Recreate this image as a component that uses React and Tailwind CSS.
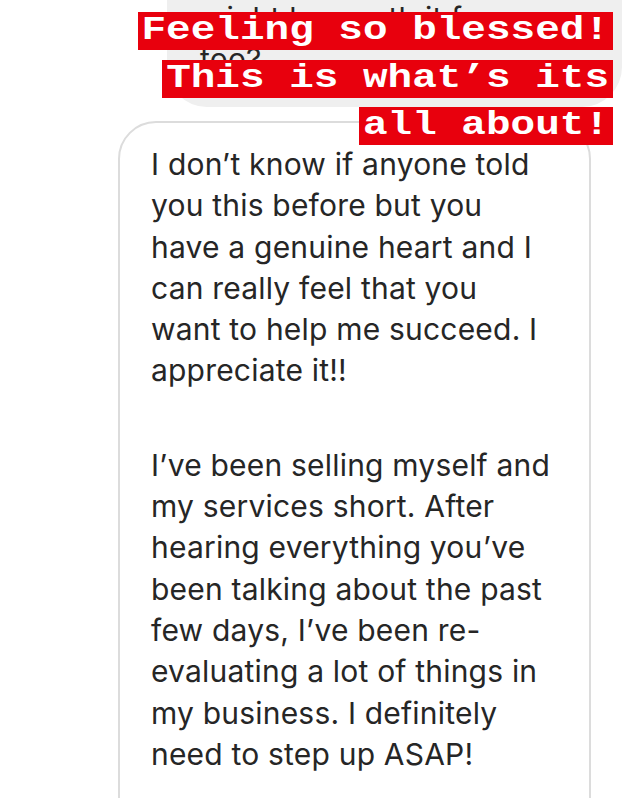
import React from "react";

const p1 = [
  "I don’t know if anyone told",
  "you this before but you",
  "have a genuine heart and I",
  "can really feel that you",
  "want to help me succeed. I",
  "appreciate it!!",
];
const p2 = [
  "I’ve been selling myself and",
  "my services short. After",
  "hearing everything you’ve",
  "been talking about the past",
  "few days, I’ve been re-",
  "evaluating a lot of things in",
  "my business. I definitely",
  "need to step up ASAP!",
];
const caption = ["Feeling so blessed!", "This is what’s its", "all about!"];

export default function App() {
  const sans = { fontFamily: "Inter, 'Noto Sans', sans-serif" };
  return (
    <div className="relative w-[633px] h-[798px] overflow-hidden bg-white">
      {/* gray received bubble (cut off at top) */}
      <div
        className="ml-[167px] w-[455px] h-[107px] bg-[#efefef] rounded-b-[40px] overflow-hidden"
        style={sans}
      >
        <div className="mt-[-2px] pl-[33px] text-[30px] leading-[41.3px] tracking-[0.2px] text-[#262626]">
          <div>might be worth it for</div>
          <div>too?</div>
        </div>
      </div>

      {/* white sent bubble */}
      <div
        className="mt-[14px] ml-[118px] w-[473px] h-[720px] border-2 border-[#dcdcdc] rounded-[38px] pt-[21px] pl-[31px] text-[30px] leading-[41.3px] text-[#262626] tracking-[0.2px]"
        style={sans}
      >
        {p1.map((l) => (
          <div key={l} className="whitespace-nowrap">{l}</div>
        ))}
        <div className="h-[53px]" />
        {p2.map((l) => (
          <div key={l} className="whitespace-nowrap">{l}</div>
        ))}
      </div>

      {/* red caption sticker */}
      <div className="absolute top-[12px] right-[20px] flex flex-col items-end gap-[9.5px]">
        {caption.map((l) => (
          <span
            key={l}
            className="block h-[38px] overflow-hidden bg-[#e8000d] text-white font-bold text-[41px] leading-[38px] px-[4px] whitespace-pre"
            style={{ fontFamily: "'Liberation Mono', 'Courier New', monospace" }}
          >
            <span className="inline-block origin-top scale-y-[0.82] translate-y-[2px]">{l}</span>
          </span>
        ))}
      </div>
    </div>
  );
}
